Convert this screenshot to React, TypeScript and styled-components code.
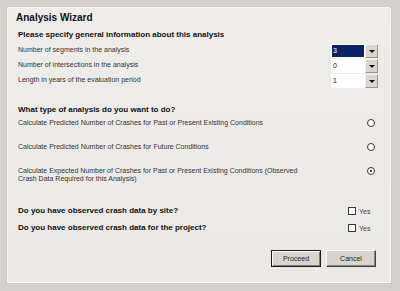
import React from 'react';
import styled, { createGlobalStyle } from 'styled-components';

const GlobalStyle = createGlobalStyle`
    html, body {
        margin: 0;
        padding: 0;
        background: #d5d1ca;
        font-family: "Liberation Sans", Arial, sans-serif;
    }
    * {
        box-sizing: border-box;
    }
`

const Page = styled.div`
    width: 400px;
    height: 291px;
    padding: 7px 9px 0 7px;
`

const Panel = styled.div`
    height: 276px;
    display: flex;
    flex-direction: column;
    padding: 4px 12px 0 8px;
    background: linear-gradient(#eeedea, #eae9e5);
    border: 1px solid #f7f6f3;
    border-radius: 0 2px 0 0;
    box-shadow: 0 0 0 1px #cfcbc4;
`

const Title = styled.h1`
    margin: 0;
    font-size: 10px;
    line-height: 12px;
    font-weight: bold;
    color: #111;
`

const Section = styled.div`
    padding-left: 2px;
    display: flex;
    flex-direction: column;
`

interface HeadingProps {
    top: number
}

const Heading = styled.h2<HeadingProps>`
    margin: ${props => props.top}px 0 0 0;
    font-size: 8px;
    line-height: 10px;
    font-weight: bold;
    color: #111;
`

const Fields = styled.div`
    margin-top: 4px;
    display: flex;
    flex-direction: column;
`

const FieldRow = styled.div`
    height: 15px;
    display: grid;
    grid-template-columns: 1fr 47px;
    align-items: start;
`

const Label = styled.span`
    font-size: 7px;
    line-height: 11px;
    color: #333;
`

const Combo = styled.div`
    height: 14px;
    display: flex;
    background: #fff;
`

const ComboField = styled.div`
    flex: 1;
    padding: 1px;
    display: flex;
`

interface ValueProps {
    selected?: boolean
}

const ComboValue = styled.span<ValueProps>`
    flex: 1;
    padding-left: 1px;
    font-size: 7px;
    line-height: 12px;
    background: ${props => props.selected ? '#0a246a' : 'transparent'};
    color: ${props => props.selected ? '#fff' : '#222'};
`

const ComboButton = styled.div`
    width: 13px;
    display: flex;
    align-items: center;
    justify-content: center;
    background: #d9d6cf;
    border: 1px solid;
    border-color: #f4f3f0 #9a968f #9a968f #f4f3f0;

    &::after {
        content: "";
        border-left: 3px solid transparent;
        border-right: 3px solid transparent;
        border-top: 3px solid #111;
    }
`

const Options = styled.div`
    margin-top: 4px;
    display: flex;
    flex-direction: column;
    gap: 16px;
`

const OptionRow = styled.div`
    display: grid;
    grid-template-columns: 1fr 11px;
    align-items: start;
`

const OptionText = styled.span`
    font-size: 7px;
    line-height: 8px;
    color: #333;
`

interface RadioProps {
    checked?: boolean
}

const Radio = styled.span<RadioProps>`
    width: 8px;
    height: 8px;
    border-radius: 50%;
    background: #fff;
    border: 1px solid #3a3a3a;
    display: flex;
    align-items: center;
    justify-content: center;

    &::after {
        content: "";
        width: 2px;
        height: 2px;
        border-radius: 50%;
        background: #111;
        display: ${props => props.checked ? 'block' : 'none'};
    }
`

const Questions = styled.div`
    margin-top: 23px;
    display: flex;
    flex-direction: column;
    gap: 7px;
`

const QuestionRow = styled.div`
    height: 10px;
    display: grid;
    grid-template-columns: 1fr 30px;
    align-items: center;
`

const Question = styled.span`
    font-size: 8px;
    line-height: 10px;
    font-weight: bold;
    color: #111;
`

const CheckLabel = styled.label`
    display: flex;
    align-items: center;
    gap: 3px;
    font-size: 7px;
    color: #444;
`

const CheckBox = styled.span`
    width: 8px;
    height: 8px;
    background: #fff;
    border: 1px solid #3a3a3a;
`

const Buttons = styled.div`
    margin-top: 17px;
    display: flex;
    justify-content: flex-end;
    gap: 5px;
    padding-right: 2px;
`

interface ButtonProps {
    primary?: boolean
}

const Button = styled.button<ButtonProps>`
    width: 50px;
    height: 17px;
    padding: 0;
    font-family: "Liberation Sans", Arial, sans-serif;
    font-size: 7px;
    color: #222;
    background: #d8d4cc;
    border: 1px solid;
    border-color: ${props => props.primary ? '#1a1a1a' : '#fbfbfa #404040 #404040 #fbfbfa'};
    box-shadow: ${props => props.primary
        ? 'inset 1px 1px #fbfbfa, inset -1px -1px #808080'
        : 'inset -1px -1px #8a867f'};
`

const fields = [
    { label: 'Number of segments in the analysis', value: '3', selected: true },
    { label: 'Number of intersections in the analysis', value: '0' },
    { label: 'Length in years of the evaluation period', value: '1' },
]

function App() {
    return (
        <Page>
            <GlobalStyle />
            <Panel>
                <Title>Analysis Wizard</Title>
                <Section>
                    <Heading top={6}>Please specify general information about this analysis</Heading>
                    <Fields>
                        {fields.map(f => (
                            <FieldRow key={f.label}>
                                <Label>{f.label}</Label>
                                <Combo>
                                    <ComboField>
                                        <ComboValue selected={f.selected}>{f.value}</ComboValue>
                                    </ComboField>
                                    <ComboButton />
                                </Combo>
                            </FieldRow>
                        ))}
                    </Fields>

                    <Heading top={16}>What type of analysis do you want to do?</Heading>
                    <Options>
                        <OptionRow>
                            <OptionText>Calculate Predicted Number of Crashes for Past or Present Existing Conditions</OptionText>
                            <Radio />
                        </OptionRow>
                        <OptionRow>
                            <OptionText>Calculate Predicted Number of Crashes for Future Conditions</OptionText>
                            <Radio />
                        </OptionRow>
                        <OptionRow>
                            <OptionText>
                                Calculate Expected Number of Crashes for Past or Present Existing Conditions (Observed<br />
                                Crash Data Required for this Analysis)
                            </OptionText>
                            <Radio checked />
                        </OptionRow>
                    </Options>

                    <Questions>
                        <QuestionRow>
                            <Question>Do you have observed crash data by site?</Question>
                            <CheckLabel><CheckBox />Yes</CheckLabel>
                        </QuestionRow>
                        <QuestionRow>
                            <Question>Do you have observed crash data for the project?</Question>
                            <CheckLabel><CheckBox />Yes</CheckLabel>
                        </QuestionRow>
                    </Questions>
                </Section>
                <Buttons>
                    <Button primary>Proceed</Button>
                    <Button>Cancel</Button>
                </Buttons>
            </Panel>
        </Page>
    )
}

export default App
